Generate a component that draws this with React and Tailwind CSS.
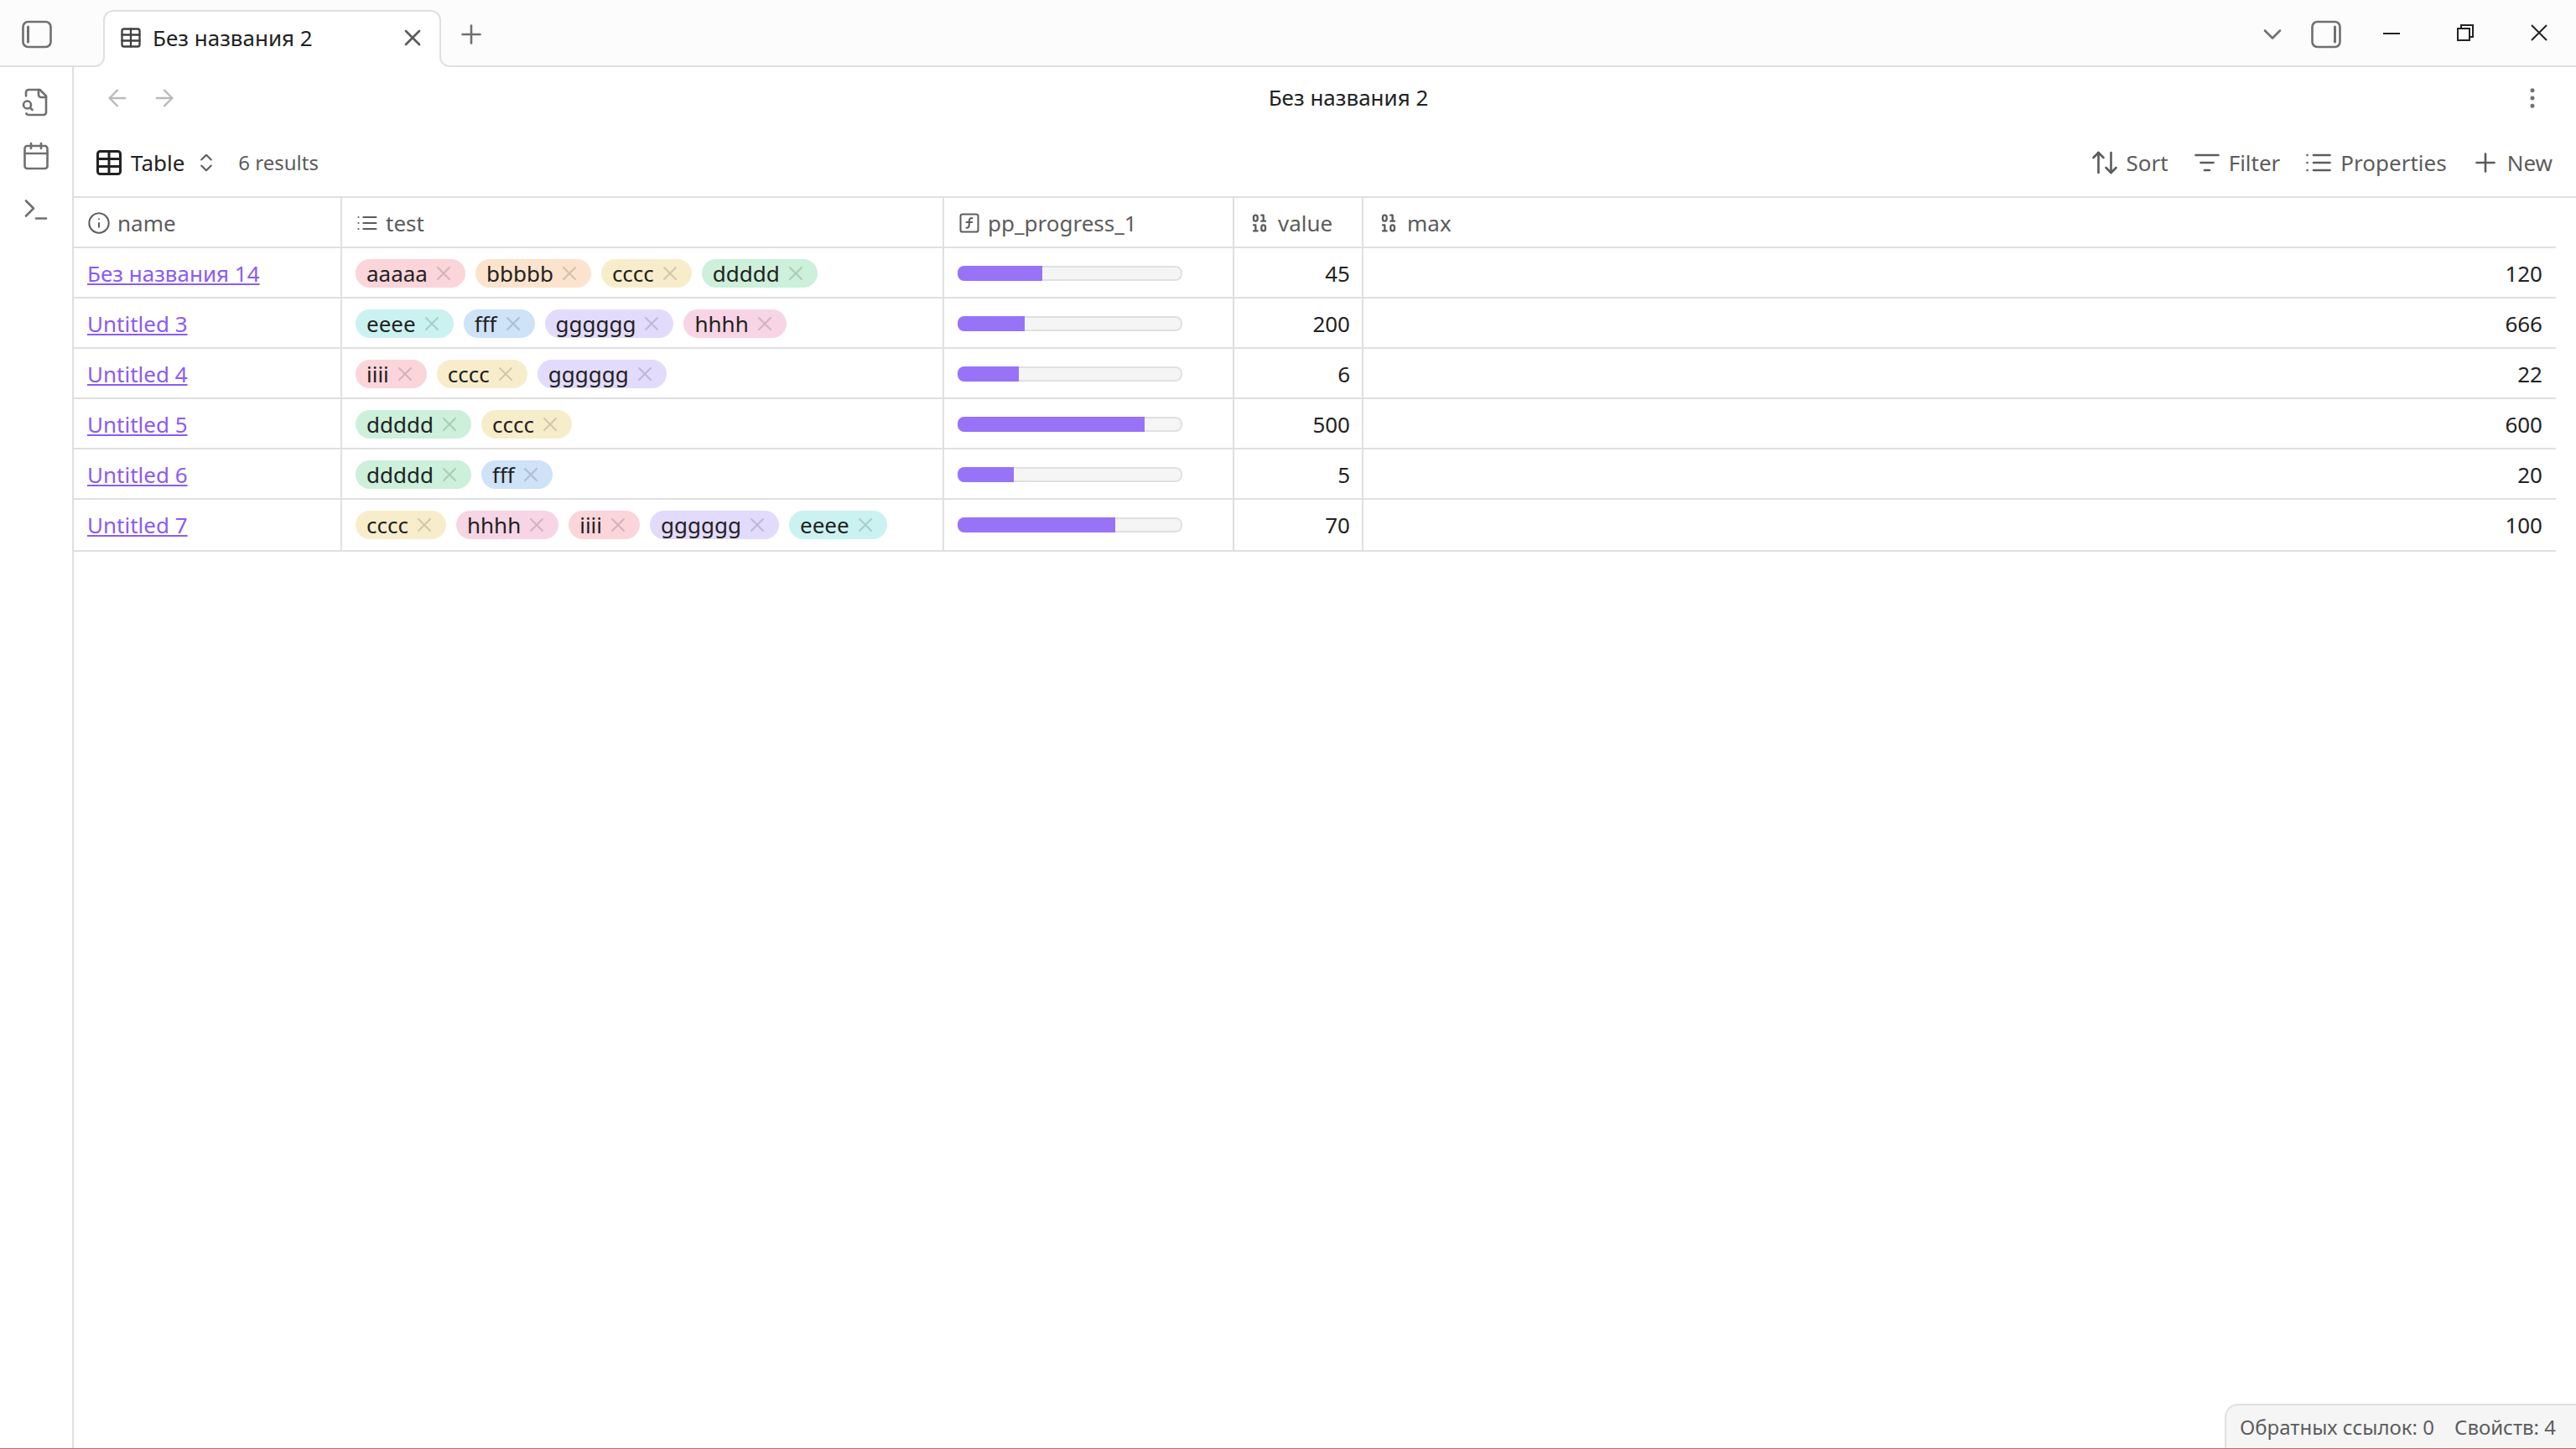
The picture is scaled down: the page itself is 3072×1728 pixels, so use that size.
import React from "react";
import {
  Table, X, Plus, ChevronDown, ArrowLeft, ArrowRight, EllipsisVertical,
  ChevronsUpDown, ArrowUpDown, Calendar, Terminal, Info,
} from "lucide-react";

function Svg({ size = 36, strokeWidth = 1.75, className = "", children }) {
  return (
    <svg width={size} height={size} viewBox="0 0 24 24" fill="none" stroke="currentColor" strokeWidth={strokeWidth}
      strokeLinecap="round" strokeLinejoin="round" className={"shrink-0 " + className} aria-hidden="true">
      {children}
    </svg>
  );
}

const SidebarIcon = ({ right }) => (
  <Svg>
    <rect x="1" y="2" width="22" height="20" rx="4" />
    <rect x={right ? 18 : 4} y="5" width="2" height="14" rx="1" fill="currentColor" stroke="none" />
  </Svg>
);

const FileSearchIcon = () => (
  <Svg>
    <path d="M14 2v4a2 2 0 0 0 2 2h4" />
    <path d="M4.268 21a2 2 0 0 0 1.727 1H18a2 2 0 0 0 2-2V7l-5-5H6a2 2 0 0 0-2 2v3" />
    <path d="m9 18-1.5-1.5" />
    <circle cx="5" cy="14" r="3" />
  </Svg>
);

const ListIcon = ({ size }) => (
  <Svg size={size}>
    <path d="M8 6h13M8 12h13M8 18h13" />
    <path d="M3 6h.01M3 12h.01M3 18h.01" />
  </Svg>
);

const FilterIcon = () => (
  <Svg>
    <path d="M3 6h18M7 12h10M10 18h4" />
  </Svg>
);

const FunctionIcon = () => (
  <Svg size={28}>
    <rect x="3" y="3" width="18" height="18" rx="2" />
    <path d="M9 17c2 0 2.8-1 2.8-2.8V10c0-2 1-3.3 3.2-3" />
    <path d="M9 11.2h5.7" />
  </Svg>
);

const BinaryIcon = () => (
  <Svg size={28} strokeWidth={2}>
    <rect x="14" y="14" width="4" height="6" rx="2" />
    <rect x="6" y="4" width="4" height="6" rx="2" />
    <path d="M6 20h4M14 10h4M6 14h2v6M14 4h2v6" />
  </Svg>
);

const TAGS = {
  aaaaa: "bg-[#fbd5da]",
  bbbbb: "bg-[#fce3cd]",
  cccc: "bg-[#f8edcb]",
  ddddd: "bg-[#ccf0da]",
  eeee: "bg-[#caf2f0]",
  fff: "bg-[#cee2f8]",
  gggggg: "bg-[#e3dbfc]",
  hhhh: "bg-[#f7d5e5]",
  iiii: "bg-[#fbd5da]",
};

const ROWS = [
  { name: "Без названия 14", tags: ["aaaaa", "bbbbb", "cccc", "ddddd"], value: 45, max: 120 },
  { name: "Untitled 3", tags: ["eeee", "fff", "gggggg", "hhhh"], value: 200, max: 666 },
  { name: "Untitled 4", tags: ["iiii", "cccc", "gggggg"], value: 6, max: 22 },
  { name: "Untitled 5", tags: ["ddddd", "cccc"], value: 500, max: 600 },
  { name: "Untitled 6", tags: ["ddddd", "fff"], value: 5, max: 20 },
  { name: "Untitled 7", tags: ["cccc", "hhhh", "iiii", "gggggg", "eeee"], value: 70, max: 100 },
];

const COLUMNS = [
  { label: "name", icon: <Info size={28} strokeWidth={1.75} /> },
  { label: "test", icon: <ListIcon size={28} /> },
  { label: "pp_progress_1", icon: <FunctionIcon /> },
  { label: "value", icon: <BinaryIcon /> },
  { label: "max", icon: <BinaryIcon /> },
];

function Tag({ name }) {
  return (
    <li className={"flex h-[34px] items-center gap-[5px] rounded-full pl-[13px] pr-3 text-[#222222] " + TAGS[name]}>
      <span>{name}</span>
      <button type="button" aria-label={"Remove " + name} className="text-black opacity-15">
        <X size={28} strokeWidth={1.75} className="block" />
      </button>
    </li>
  );
}

function Progress({ label, value, max }) {
  return (
    <div role="progressbar" aria-label={label} aria-valuenow={value} aria-valuemin={0} aria-valuemax={max}
      className="relative h-[18px] w-[268px] overflow-hidden rounded-lg bg-[#f5f5f5]">
      <div className="absolute inset-0 rounded-lg border-2 border-[#e0e0e0]" />
      <div className="relative h-full bg-[#9873f7]" style={{ width: (value / max) * 100 + "%" }} />
    </div>
  );
}

function TabFlare({ flip }) {
  return (
    <svg width="12" height="12" viewBox="0 0 12 12" aria-hidden="true"
      className={flip ? "absolute bottom-0 -right-3 -scale-x-100" : "absolute bottom-0 -left-3"}>
      <path d="M0 12V11A11 11 0 0 0 11 0H12V12Z" fill="#ffffff" />
      <path d="M0 11A11 11 0 0 0 11 0" fill="none" stroke="#e0e0e0" strokeWidth="2" />
    </svg>
  );
}

function TitleBar() {
  return (
    <header className="flex h-20 shrink-0 items-stretch border-b-2 border-[#e0e0e0] bg-[#fcfcfc] text-[#707070]">
      <button type="button" aria-label="Toggle left sidebar" className="flex w-[88px] items-center justify-center pt-1">
        <SidebarIcon />
      </button>
      <div role="tablist" className="ml-[35px] flex pt-3">
        <div role="tab" aria-selected="true"
          className="relative -mb-0.5 flex w-[403px] items-center rounded-t-xl border-2 border-b-0 border-[#e0e0e0] bg-white pb-1 pl-[17px] pr-4 text-[#5c5c5c]">
          <TabFlare />
          <TabFlare flip />
          <Table size={28} strokeWidth={2} className="shrink-0 text-[#404040]" />
          <span className="ml-3 flex-1 text-[#222222]">Без названия 2</span>
          <button type="button" aria-label="Close tab"><X size={32} strokeWidth={2} className="block" /></button>
        </div>
      </div>
      <button type="button" aria-label="New tab" className="ml-[18px] pt-1"><Plus size={36} strokeWidth={1.75} /></button>
      <div className="ml-auto flex items-stretch">
        <button type="button" aria-label="Tab list" className="pt-1"><ChevronDown size={36} strokeWidth={1.75} /></button>
        <button type="button" aria-label="Toggle right sidebar" className="ml-7 mr-4 pt-1"><SidebarIcon right /></button>
        <button type="button" aria-label="Minimize" className="flex w-[88px] items-center justify-center text-[#222222]">
          <svg width="20" height="20" viewBox="0 0 20 20" aria-hidden="true"><path d="M0 11h20" stroke="currentColor" strokeWidth="2" /></svg>
        </button>
        <button type="button" aria-label="Restore" className="flex w-[88px] items-center justify-center text-[#222222]">
          <svg width="20" height="20" viewBox="0 0 20 20" fill="none" stroke="currentColor" strokeWidth="2" aria-hidden="true">
            <path d="M1 5h14v14H1ZM5 5V1h14v14h-4" />
          </svg>
        </button>
        <button type="button" aria-label="Close" className="flex w-[88px] items-center justify-center text-[#222222]">
          <svg width="20" height="20" viewBox="0 0 20 20" fill="none" stroke="currentColor" strokeWidth="2" aria-hidden="true">
            <path d="M1 1l18 18M19 1L1 19" />
          </svg>
        </button>
      </div>
    </header>
  );
}

function ToolButton({ icon, children }) {
  return (
    <button type="button" className="flex items-center gap-2">{icon}{children}</button>
  );
}

export default function App() {
  return (
    <div className="relative flex min-h-screen flex-col overflow-hidden border-b border-[#bf6a6a] bg-white font-['Noto_Sans',sans-serif] text-[26px] leading-9 text-[#222222]">
      <TitleBar />
      <div className="flex flex-1">
        <nav className="flex w-[88px] shrink-0 flex-col items-center gap-7 border-r-2 border-[#e0e0e0] pt-6 text-[#707070]">
          <button type="button" aria-label="Search in files"><FileSearchIcon /></button>
          <button type="button" aria-label="Calendar"><Calendar size={36} strokeWidth={1.75} /></button>
          <button type="button" aria-label="Terminal"><Terminal size={36} strokeWidth={1.75} /></button>
        </nav>
        <main className="min-w-0 flex-1">
          <div className="flex h-[74px] items-center px-9">
            <div className="flex gap-6 text-[#bababa]">
              <button type="button" aria-label="Back"><ArrowLeft size={32} strokeWidth={1.75} /></button>
              <button type="button" aria-label="Forward"><ArrowRight size={32} strokeWidth={1.75} /></button>
            </div>
            <h1 className="flex-1 pb-0.5 text-center">Без названия 2</h1>
            <button type="button" aria-label="More options" className="text-[#707070]">
              <EllipsisVertical size={32} strokeWidth={1.75} />
            </button>
          </div>
          <div className="flex h-20 items-center pl-6 pr-7 text-[#5c5c5c]">
            <button type="button" className="flex items-center gap-2 text-[#222222]">
              <Table size={36} strokeWidth={2} />
              Table
              <ChevronsUpDown size={28} strokeWidth={1.75} className="ml-1 text-[#5c5c5c]" />
            </button>
            <span className="ml-6 text-2xl">6 results</span>
            <div className="ml-auto flex gap-7">
              <ToolButton icon={<ArrowUpDown size={36} strokeWidth={1.75} />}>Sort</ToolButton>
              <ToolButton icon={<FilterIcon />}>Filter</ToolButton>
              <ToolButton icon={<ListIcon size={36} />}>Properties</ToolButton>
              <ToolButton icon={<Plus size={36} strokeWidth={1.75} />}>New</ToolButton>
            </div>
          </div>
          <div className="border-t-2 border-[#e0e0e0] pr-6">
            <table className="w-full table-fixed border-separate border-spacing-0">
              <colgroup>
                <col className="w-80" />
                <col className="w-[718px]" />
                <col className="w-[346px]" />
                <col className="w-[154px]" />
                <col />
              </colgroup>
              <thead>
                <tr className="h-[60px]">
                  {COLUMNS.map((c) => (
                    <th key={c.label} scope="col"
                      className="border-b-2 border-r-2 border-[#e0e0e0] pt-0.5 pl-4 text-left align-middle font-normal text-[#5c5c5c] last:border-r-0">
                      <span className="flex items-center gap-2">{c.icon}{c.label}</span>
                    </th>
                  ))}
                </tr>
              </thead>
              <tbody className="[&_td]:border-b-2 [&_td]:border-r-2 [&_td]:border-[#e0e0e0] [&_td]:pl-4 [&_td]:pt-0.5 [&_td]:align-middle [&_td:last-child]:border-r-0 [&_tr:last-child_td]:pt-0">
                {ROWS.map((r) => (
                  <tr key={r.name} className="h-[60px] last:h-[62px]">
                    <td>
                      <a href="#" className="text-[#8a5cf5] underline decoration-2 underline-offset-2">{r.name}</a>
                    </td>
                    <td>
                      <ul className="flex gap-3">{r.tags.map((t) => <Tag key={t} name={t} />)}</ul>
                    </td>
                    <td><Progress label={r.name} value={r.value} max={r.max} /></td>
                    <td className="pr-3.5 text-right">{r.value}</td>
                    <td className="pr-4 text-right">{r.max}</td>
                  </tr>
                ))}
              </tbody>
            </table>
          </div>
        </main>
      </div>
      <footer className="absolute bottom-0 right-0 flex h-[53px] items-center gap-6 rounded-tl-2xl border-l-2 border-t-2 border-[#e0e0e0] bg-[#f5f5f5] pl-4 pr-6 text-2xl text-[#5c5c5c]">
        <span>Обратных ссылок: 0</span>
        <span>Свойств: 4</span>
      </footer>
    </div>
  );
}
